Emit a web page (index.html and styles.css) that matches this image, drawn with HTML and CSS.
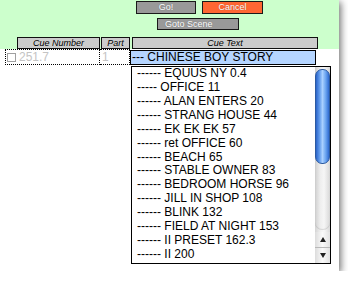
FILE: index.html
```html
<!DOCTYPE html>
<html>
<head>
<meta charset="utf-8">
<link rel="stylesheet" href="styles.css">
</head>
<body>
<div class="window">
  <div class="top">
    <div class="btnrow">
      <div class="btn gray go">Go!</div>
      <div class="btn cancel">Cancel</div>
    </div>
    <div class="btnrow2">
      <div class="btn gray goto">Goto Scene</div>
    </div>
    <div class="header">
      <div class="hcell hnum">Cue Number</div>
      <div class="hcell hpart">Part</div>
      <div class="hcell htext">Cue Text</div>
    </div>
  </div>
  <div class="main">
    <div class="row">
      <div class="cell cnum"><span class="chk"></span><span class="dim">251.7</span></div>
      <div class="cell cpart"><span class="dim">1</span></div>
      <div class="cell ctext">--- CHINESE BOY STORY</div>
    </div>
    <div class="list">
      <ul class="items">
        <li>------ EQUUS NY 0.4</li>
        <li>----- OFFICE 11</li>
        <li>------ ALAN ENTERS 20</li>
        <li>------ STRANG HOUSE 44</li>
        <li>------ EK EK EK 57</li>
        <li>------ ret OFFICE 60</li>
        <li>------ BEACH 65</li>
        <li>------ STABLE OWNER 83</li>
        <li>------ BEDROOM HORSE 96</li>
        <li>------ JILL IN SHOP 108</li>
        <li>------ BLINK 132</li>
        <li>------ FIELD AT NIGHT 153</li>
        <li>------ II PRESET 162.3</li>
        <li>------ II 200</li>
      </ul>
      <div class="scroll">
        <div class="track">
          <div class="thumb"></div>
        </div>
        <div class="arrow up"><span class="tri-up"></span></div>
        <div class="arrow down"><span class="tri-down"></span></div>
      </div>
    </div>
  </div>
</div>
</body>
</html>
```
FILE: styles.css
```css
html, body {
  margin: 0;
  padding: 0;
  background: #ffffff;
  font-family: "Liberation Sans", Arial, sans-serif;
}

.window {
  width: 339px;
  height: 271px;
  background: #ffffff;
  box-shadow: 2px 2px 7px rgba(0, 0, 0, 0.55);
  overflow: hidden;
}

.top {
  background: #ccffcc;
  height: 49px;
  padding-top: 1px;
  box-sizing: border-box;
}

.btnrow {
  display: flex;
  gap: 6px;
  margin-left: 136px;
}

.btnrow2 {
  display: flex;
  margin-left: 157px;
  margin-top: 4px;
}

.btn {
  box-sizing: border-box;
  height: 13px;
  border: 1px solid #1a1a1a;
  color: #ffffff;
  font-size: 9px;
  line-height: 11px;
  text-align: center;
  text-shadow: 0 0 1px rgba(0, 0, 0, 0.35);
}

.gray {
  background: #999999;
}

.go {
  width: 60px;
}

.cancel {
  width: 61px;
  background: #ff6633;
}

.goto {
  width: 82px;
  height: 12px;
  line-height: 10px;
  text-align: left;
  padding-left: 7px;
}

.header {
  display: flex;
  margin-top: 7px;
  margin-left: 17px;
}

.hcell {
  box-sizing: border-box;
  height: 12px;
  background: #cccccc;
  border: 1px solid #111111;
  font-size: 9px;
  font-style: italic;
  line-height: 10px;
  text-align: center;
  color: #000;
}

.hnum {
  width: 83px;
}

.hpart {
  width: 29px;
  margin-left: 1px;
}

.htext {
  width: 186px;
  margin-left: 2px;
}

.main {
  position: relative;
  height: 222px;
}

.row {
  display: flex;
  margin-left: 5px;
}

.cell {
  box-sizing: border-box;
  font-size: 12px;
  line-height: 14px;
  height: 16px;
}

.cnum {
  width: 95px;
  border: 1px dotted #000;
  display: flex;
  align-items: center;
}

.chk {
  display: inline-block;
  box-sizing: border-box;
  width: 9px;
  height: 9px;
  border: 1px solid #a0a0a0;
  background: #fff;
  margin-left: 1px;
  margin-right: 3px;
}

.dim {
  color: #c4c4c4;
}

.cpart {
  width: 30px;
  border: 1px dotted #000;
  border-left: none;
  padding-left: 2px;
}

.ctext {
  width: 186px;
  height: 15px;
  margin-top: 1px;
  background: #b5d5ff;
  border: 1px solid #000;
  padding-left: 1px;
  line-height: 13px;
  color: #000;
}

.list {
  position: absolute;
  left: 131px;
  top: 17px;
  width: 200px;
  height: 198px;
  box-sizing: border-box;
  border: 1px solid #000;
  background: #fff;
  display: flex;
}

.items {
  list-style: none;
  margin: 0;
  padding: 0 0 0 5px;
  flex: 1;
  font-size: 12px;
  line-height: 13.92px;
  color: #000;
}

.items li {
  white-space: pre;
}

.scroll {
  width: 15px;
  display: flex;
  flex-direction: column;
  background: linear-gradient(to right, #d4d4d4, #f2f2f2 40%, #f7f7f7 60%, #dadada);
}

.track {
  flex: 1;
  padding: 2px 0 0 0;
  background: linear-gradient(to right, #cfcfcf, #eeeeee 35%, #f6f6f6 60%, #d8d8d8);
  border-radius: 0 0 7px 7px;
  margin-bottom: 2px;
  box-shadow: inset 0 -1px 1px rgba(0,0,0,0.12);
}

.thumb {
  height: 95px;
  border-radius: 7px;
  box-sizing: border-box;
  border: 1px solid #2c5aa0;
  background: linear-gradient(to right, #2a63c8, #5c97ea 25%, #a9d0ff 50%, #6aa4f0 75%, #2f6ad0);
}

.arrow {
  height: 15px;
  display: flex;
  align-items: center;
  justify-content: center;
  background: linear-gradient(to right, #dcdcdc, #fafafa 50%, #e2e2e2);
}

.arrow.up {
  border-bottom: 1px solid #b8b8b8;
}

.tri-up {
  width: 0;
  height: 0;
  border-left: 3px solid transparent;
  border-right: 3px solid transparent;
  border-bottom: 5px solid #222;
}

.tri-down {
  width: 0;
  height: 0;
  border-left: 3px solid transparent;
  border-right: 3px solid transparent;
  border-top: 5px solid #222;
}
```
